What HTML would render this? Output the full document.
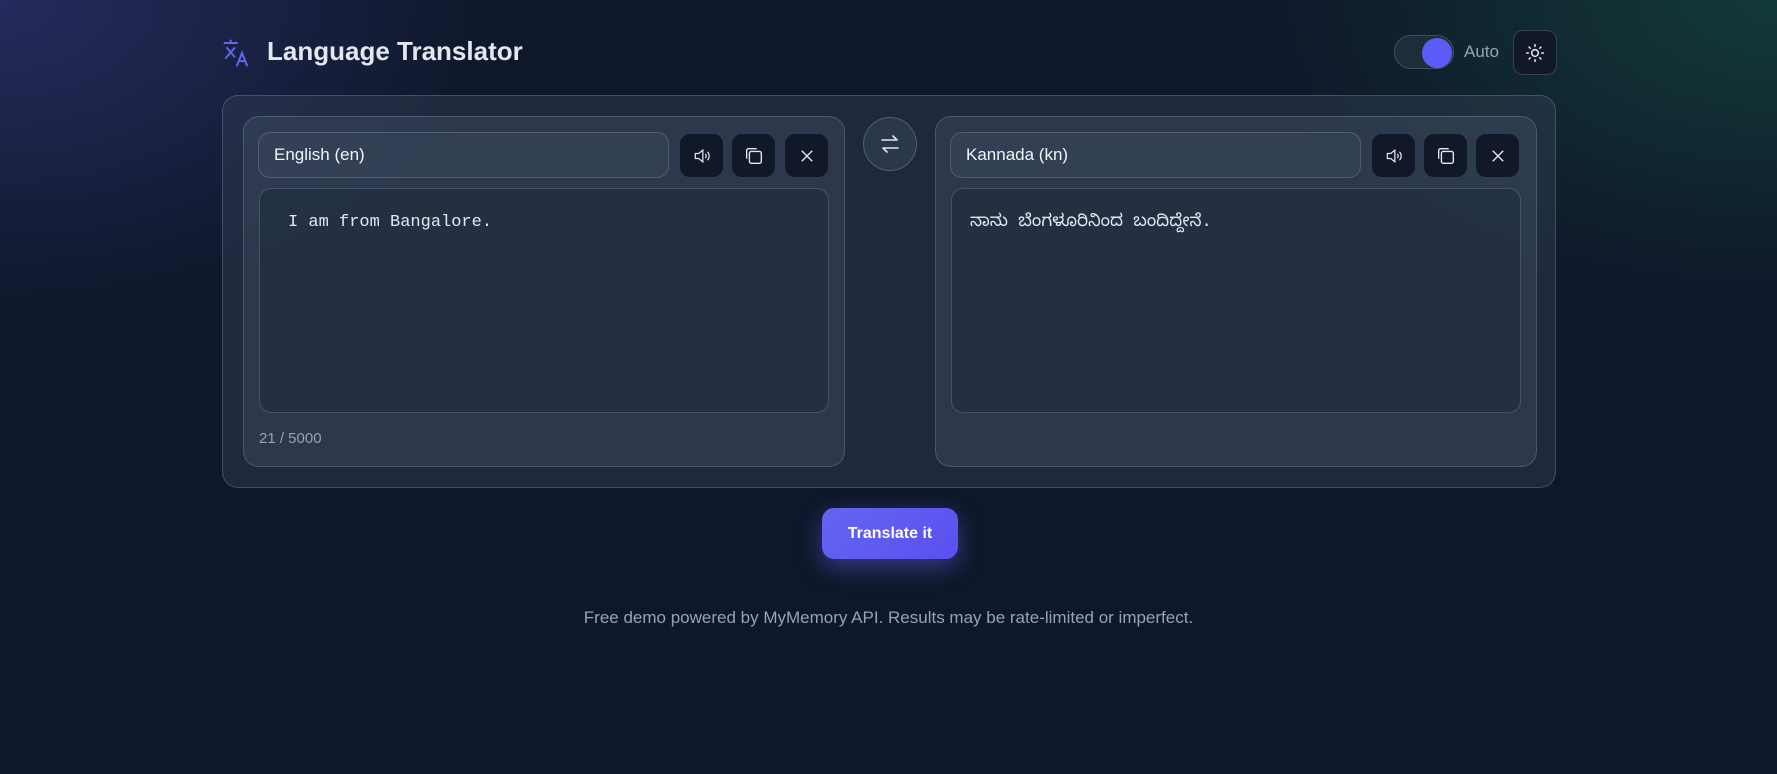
<!DOCTYPE html>
<html><head><meta charset="utf-8"><style>
*{box-sizing:border-box;margin:0;padding:0}
html,body{width:1777px;height:774px;overflow:hidden}
body{font-family:"Liberation Sans",sans-serif;color:#e2e8f0;
background:
radial-gradient(ellipse 600px 380px at 0px 0px,rgba(70,74,170,.4),transparent 85%),
radial-gradient(ellipse 620px 360px at 1777px 0px,rgba(22,101,72,.45),transparent 85%),
#0f172a;position:relative}
.abs{position:absolute}
.title{left:267px;top:36px;font-size:26px;font-weight:bold;color:#e2e8f0}
.card{left:222px;top:95px;width:1334px;height:393px;border-radius:16px;border:1px solid rgba(148,163,184,.3);background:rgba(51,65,85,.45)}
.panel{top:116px;width:602px;height:351px;border-radius:16px;border:1px solid rgba(148,163,184,.3);background:rgba(71,85,105,.35)}
.sel{height:46px;width:411px;border-radius:12px;border:1px solid rgba(148,163,184,.3);background:rgba(71,85,105,.25);font-size:17px;padding:0 15px;line-height:44px;color:#f1f5f9}
.btn{width:43px;height:43px;border-radius:10px;background:#111827;display:flex;align-items:center;justify-content:center}
.ta{width:570px;height:225px;border-radius:12px;border:1px solid rgba(148,163,184,.3);background:rgba(30,41,59,.55);font-family:"Liberation Mono","Noto Sans CJK SC",monospace;font-size:17px;padding:24px 28px;color:#e2e8f0}
</style></head><body>
<svg class="abs" style="left:222px;top:38px" width="30" height="30" viewBox="0 0 24 24" fill="none" stroke="#6366f1" stroke-width="1.6" stroke-linecap="round"><path d="M2 4h10M7 2v2M4 8l6 7M10 8l-7 8M12 22l4-10 4 10M13.5 18.5h5"/></svg>
<div class="abs title">Language Translator</div>
<div class="abs" style="left:1394px;top:35px;width:60px;height:34px;border-radius:17px;background:#1e2d38;border:1px solid rgba(148,163,184,.3)"></div>
<div class="abs" style="left:1422px;top:38px;width:30px;height:30px;border-radius:50%;background:#5b5cf6"></div>
<div class="abs" style="left:1464px;top:42px;font-size:17px;color:#94a3b8">Auto</div>
<div class="abs btn" style="left:1513px;top:30px;width:44px;height:45px;border:1px solid rgba(148,163,184,.3);border-radius:10px">
<svg width="20" height="20" viewBox="0 0 24 24" fill="none" stroke="#e2e8f0" stroke-width="1.8" stroke-linecap="round"><circle cx="12" cy="12" r="4"/><path d="M12 2v2M12 20v2M2 12h2M20 12h2M4.9 4.9l1.4 1.4M17.7 17.7l1.4 1.4M4.9 19.1l1.4-1.4M17.7 6.3l1.4-1.4"/></svg></div>
<div class="abs card"></div>
<div class="abs panel" style="left:243px"></div>
<div class="abs panel" style="left:935px"></div>
<div class="abs sel" style="left:258px;top:132px">English (en)</div>
<div class="abs sel" style="left:950px;top:132px">Kannada (kn)</div>
<div class="abs ta" style="left:259px;top:188px">I am from Bangalore.</div>
<div class="abs ta" style="left:951px;top:188px;padding-left:18px;font-family:'Liberation Mono','Noto Sans Kannada','Noto Sans CJK SC',sans-serif">ನಾನು ಬೆಂಗಳೂರಿನಿಂದ ಬಂದಿದ್ದೇನೆ.</div>
<div class="abs" style="left:259px;top:430px;font-size:15px;color:#94a3b8">21 / 5000</div>
<div class="abs" style="left:863px;top:117px;width:54px;height:54px;border-radius:50%;border:1px solid rgba(148,163,184,.35);background:rgba(51,65,85,.6);display:flex;align-items:center;justify-content:center">
<svg width="24" height="24" viewBox="0 0 24 24" fill="none" stroke="#e2e8f0" stroke-width="1.6" stroke-linecap="round" stroke-linejoin="round"><path d="M4 8h15l-4-4M20 16H5l4 4"/></svg></div>
<div class="abs btn" style="left:680px;top:134px"><svg width="20" height="20" viewBox="0 0 24 24" fill="none" stroke="#e2e8f0" stroke-width="1.5"><path d="M4 9h4l5-4v14l-5-4H4z"/><path d="M16 9.5a3.5 3.5 0 010 5M18.5 7a7 7 0 010 10"/></svg></div>
<div class="abs btn" style="left:732px;top:134px"><svg width="22" height="22" viewBox="0 0 24 24" fill="none" stroke="#e2e8f0" stroke-width="1.5"><rect x="7" y="7" width="13" height="13" rx="2"/><path d="M4 15V6a2 2 0 012-2h9"/></svg></div>
<div class="abs btn" style="left:785px;top:134px"><svg width="18" height="18" viewBox="0 0 24 24" stroke="#e2e8f0" stroke-width="1.8"><path d="M5 5l14 14M19 5L5 19"/></svg></div>
<div class="abs btn" style="left:1372px;top:134px"><svg width="20" height="20" viewBox="0 0 24 24" fill="none" stroke="#e2e8f0" stroke-width="1.5"><path d="M4 9h4l5-4v14l-5-4H4z"/><path d="M16 9.5a3.5 3.5 0 010 5M18.5 7a7 7 0 010 10"/></svg></div>
<div class="abs btn" style="left:1424px;top:134px"><svg width="22" height="22" viewBox="0 0 24 24" fill="none" stroke="#e2e8f0" stroke-width="1.5"><rect x="7" y="7" width="13" height="13" rx="2"/><path d="M4 15V6a2 2 0 012-2h9"/></svg></div>
<div class="abs btn" style="left:1476px;top:134px"><svg width="18" height="18" viewBox="0 0 24 24" stroke="#e2e8f0" stroke-width="1.8"><path d="M5 5l14 14M19 5L5 19"/></svg></div>
<div class="abs" style="left:822px;top:508px;width:136px;height:51px;border-radius:12px;background:linear-gradient(135deg,#6366f1,#5b4ff0);box-shadow:0 8px 24px rgba(99,102,241,.45);color:#fff;font-weight:bold;font-size:16px;text-align:center;line-height:51px">Translate it</div>
<div class="abs" style="left:0;width:1777px;top:608px;text-align:center;font-size:17px;color:#94a3b8">Free demo powered by MyMemory API. Results may be rate-limited or imperfect.</div>
</body></html>
